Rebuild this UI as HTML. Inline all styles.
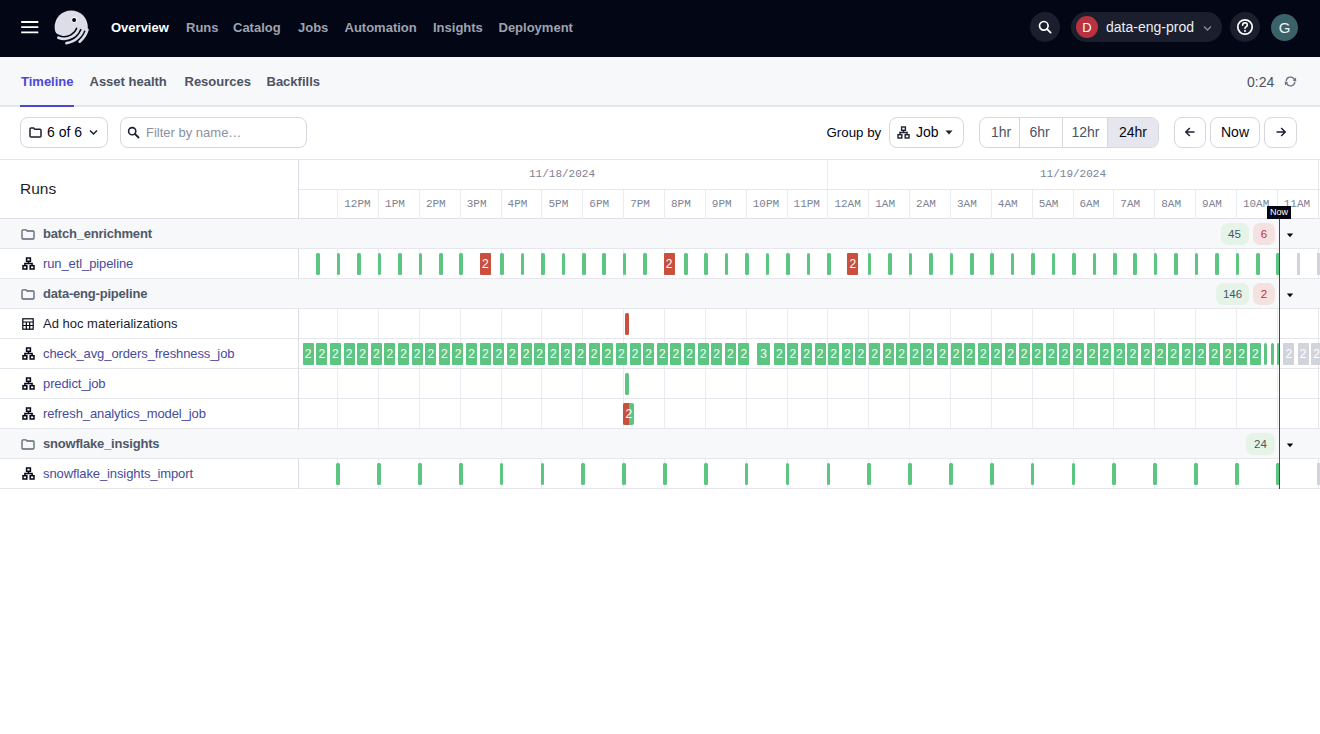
<!DOCTYPE html><html><head><meta charset="utf-8"><style>
*{box-sizing:border-box;margin:0;padding:0}
html,body{width:1320px;height:734px;overflow:hidden;background:#fff;font-family:"Liberation Sans",sans-serif;color:#030615}
.abs{position:absolute}
#nav{position:absolute;left:0;top:0;width:1320px;height:57px;background:#030615}
.ni{position:absolute;top:18px;font:700 13px/20px "Liberation Sans",sans-serif;color:#9ea2b0;white-space:nowrap}
#tabs{position:absolute;left:0;top:57px;width:1320px;height:50px;background:#f7f8fa;border-bottom:2px solid #e6e7ec}
.tab{position:absolute;top:15px;font:700 13px/20px "Liberation Sans",sans-serif;color:#4c5364;white-space:nowrap}
.btn{position:absolute;top:117px;height:31px;border:1px solid #d6d7df;border-radius:8px;background:#fff}
.txt14{font:400 14px/20px "Liberation Sans",sans-serif;color:#030615;white-space:nowrap}
#tl{position:absolute;left:0;top:159px;width:1320px}
.hdr{position:absolute;font:400 11px/14px "Liberation Mono",monospace;color:#7d8294;white-space:nowrap}
.row{position:absolute;left:0;width:1320px;height:30px;border-bottom:1px solid #e6e7ec}
.grp{background:#f7f8fa}
.lbl{position:absolute;left:43px;top:7px;font:400 13px/16px "Liberation Sans",sans-serif;white-space:nowrap}
.grp .lbl{font-weight:700;color:#505768;letter-spacing:-0.2px}
.job .lbl{color:#474b9c;letter-spacing:-0.1px}
.g{position:absolute;background:#5cc582;border-radius:1.5px}
.r{position:absolute;background:#c9503d;border-radius:1.5px}
.f{position:absolute;background:#d2d4dc}
.bx{position:absolute;height:22px;width:11px;border-radius:1px;background:#5cc582;color:#fff;font:400 12px/22px "Liberation Sans",sans-serif;text-align:center;overflow:hidden}
.bx.fu{background:#d2d4dc}
.bx.rd{background:#c9503d}
.vl{position:absolute;width:1px;background:#ebecf0}
.pill{position:absolute;height:22px;border-radius:7px;font:400 11.5px/22px "Liberation Sans",sans-serif;text-align:center}
</style></head><body>
<div id="nav">
<svg class="abs" style="left:20px;top:18px" width="20" height="18" viewBox="0 0 20 18"><g stroke="#fff" stroke-width="1.8"><path d="M1.2 4 H18.3 M1.2 9.2 H18.3 M1.2 14.4 H18.3"/></g></svg>
<svg class="abs" style="left:52px;top:8px" width="38" height="38" viewBox="0 0 38 38">
<g><circle cx="19.2" cy="19" r="16.6" fill="#dcdde6"/><path d="M24.22 19.45 A13.0 13.0 0 0 1 -1.00 15.00 L-10 15.00 L-10 45 L45 45 L38.31 24.58 Z" fill="#030615"/></g>
<g fill="none" stroke="#dcdde6" stroke-width="2.7" stroke-linecap="round"><path d="M27.65 17.20 A15.8 15.8 0 0 1 6.34 29.75"/><path d="M32.00 17.81 A20.2 20.2 0 0 1 14.46 35.05"/><path d="M35.45 21.73 A24.4 24.4 0 0 1 27.68 33.69"/></g>
<circle cx="22.3" cy="11.6" r="3.1" fill="#f4f5f8"/>
<circle cx="22.1" cy="11.9" r="2" fill="#030615"/>
</svg>
<div class="ni" style="left:111px;color:#fff;">Overview</div>
<div class="ni" style="left:186px;">Runs</div>
<div class="ni" style="left:233px;">Catalog</div>
<div class="ni" style="left:298px;">Jobs</div>
<div class="ni" style="left:344.5px;">Automation</div>
<div class="ni" style="left:433px;">Insights</div>
<div class="ni" style="left:498.5px;">Deployment</div>
<div class="abs" style="left:1030px;top:12px;width:30px;height:30px;border-radius:15px;background:#1b1e2c"></div>
<svg class="abs" style="left:1037px;top:19px" width="16" height="16" viewBox="0 0 16 16"><circle cx="6.8" cy="6.8" r="4.3" stroke="#fff" stroke-width="1.7" fill="none"/><path d="M9.9 9.9 L13.6 13.6" stroke="#fff" stroke-width="1.9" stroke-linecap="round"/></svg>
<div class="abs" style="left:1071px;top:12px;width:151px;height:30px;border-radius:15px;background:#1b1e2c"></div>
<div class="abs" style="left:1076px;top:16px;width:22px;height:22px;border-radius:11px;background:#b8323f;color:#fff;font:400 13px/24px Liberation Sans;text-align:center">D</div>
<div class="abs" style="left:1106px;top:17px;font:400 14px/20px Liberation Sans;color:#eceef3;white-space:nowrap">data-eng-prod</div>
<svg class="abs" style="left:1203px;top:24.5px" width="9" height="7" viewBox="0 0 9 7"><path d="M1 1.5 L4.5 5 L8 1.5" stroke="#8a8e9c" stroke-width="1.3" fill="none"/></svg>
<div class="abs" style="left:1230px;top:12px;width:30px;height:30px;border-radius:15px;background:#1b1e2c"></div>
<svg class="abs" style="left:1236px;top:18px" width="18" height="18" viewBox="0 0 18 18"><circle cx="9" cy="9" r="7.2" stroke="#fff" stroke-width="1.7" fill="none"/><path d="M6.6 7.1 Q6.7 4.8 9 4.8 Q11.3 4.9 11.3 6.9 Q11.3 8.3 9.8 8.9 Q9 9.3 9 10.5" stroke="#fff" stroke-width="1.6" fill="none" stroke-linecap="round"/><circle cx="9" cy="13" r="1" fill="#fff"/></svg>
<div class="abs" style="left:1271px;top:14px;width:27px;height:27px;border-radius:14px;background:#3b6169;color:#eef1f3;font:400 15px/27px Liberation Sans;text-align:center">G</div>
</div>
<div id="tabs">
<div class="tab" style="left:21px;color:#4b47d8;">Timeline</div>
<div class="tab" style="left:89.5px;">Asset health</div>
<div class="tab" style="left:184.5px;">Resources</div>
<div class="tab" style="left:266.5px;">Backfills</div>
<div class="abs" style="left:20px;top:48px;width:54px;height:2px;background:#4b47d8"></div>
<div class="abs" style="left:1247px;top:15px;font:400 14px/20px Liberation Sans;color:#4c5364">0:24</div>
<svg class="abs" style="left:1283px;top:17.5px" width="15" height="13" viewBox="0 0 15 13"><g stroke="#6c7282" stroke-width="1.3" fill="none"><path d="M3.2 6.2 A4.3 4.3 0 0 1 11.2 4.2"/><path d="M11.8 6.8 A4.3 4.3 0 0 1 3.8 8.8"/></g><path d="M12.9 2.6 L13.3 6.4 L9.6 5.6 Z" fill="#6c7282"/><path d="M2.1 10.4 L1.7 6.6 L5.4 7.4 Z" fill="#6c7282"/></svg>
</div>
<div class="btn" style="left:20px;width:88px"></div>
<svg class="abs" style="left:29px;top:127px" width="13" height="11" viewBox="0 0 13 11"><path d="M1 2 Q1 1 2 1 L4.6 1 L5.8 2.2 L11 2.2 Q12 2.2 12 3.2 L12 9 Q12 10 11 10 L2 10 Q1 10 1 9 Z" stroke="#1d2130" stroke-width="1.5" fill="none"/></svg>
<div class="abs txt14" style="left:47px;top:122px">6 of 6</div>
<svg class="abs" style="left:89px;top:129px" width="9" height="7" viewBox="0 0 9 7"><path d="M1 1.5 L4.5 5 L8 1.5" stroke="#1d2130" stroke-width="1.5" fill="none"/></svg>
<div class="btn" style="left:120px;width:187px"></div>
<svg class="abs" style="left:127px;top:126px" width="13" height="13" viewBox="0 0 13 13"><circle cx="5.2" cy="5.2" r="3.6" stroke="#1d2130" stroke-width="1.6" fill="none"/><path d="M8 8 L11.5 11.5" stroke="#1d2130" stroke-width="1.8" stroke-linecap="round"/></svg>
<div class="abs" style="left:146px;top:123px;font:400 13px/20px Liberation Sans;color:#8b90a0;white-space:nowrap">Filter by name…</div>
<div class="abs" style="left:826.5px;top:123px;font:400 13.3px/20px Liberation Sans;color:#030615;white-space:nowrap">Group by</div>
<div class="btn" style="left:889px;width:75px"></div>
<svg class="abs" style="left:897px;top:126px" width="13" height="13" viewBox="0 0 13 13"><g stroke="#1d2130" stroke-width="1.4" fill="none"><rect x="4.6" y="1" width="3.8" height="3.3"/><rect x="1" y="8.7" width="3.8" height="3.3"/><rect x="8.2" y="8.7" width="3.8" height="3.3"/><path d="M6.5 4.3 V6.5 M2.9 8.7 V6.5 H10.1 V8.7"/></g></svg>
<div class="abs txt14" style="left:916px;top:122px">Job</div>
<svg class="abs" style="left:945px;top:130px" width="8" height="5" viewBox="0 0 8 5"><path d="M0.5 0.5 L7.5 0.5 L4 4.5 Z" fill="#1d2130"/></svg>
<div class="btn" style="left:979px;width:180px;overflow:hidden"><div class="abs" style="left:128px;top:0;width:52px;height:29px;background:#e6e7ee"></div><div class="abs" style="left:39px;top:0;width:1px;height:29px;background:#d6d7df"></div><div class="abs" style="left:82px;top:0;width:1px;height:29px;background:#d6d7df"></div><div class="abs" style="left:127px;top:0;width:1px;height:29px;background:#d6d7df"></div></div>
<div class="abs txt14" style="left:991px;top:122px;color:#4c5364">1hr</div>
<div class="abs txt14" style="left:1029.5px;top:122px;color:#4c5364">6hr</div>
<div class="abs txt14" style="left:1071.5px;top:122px;color:#4c5364">12hr</div>
<div class="abs txt14" style="left:1119px;top:122px;color:#030615">24hr</div>
<div class="btn" style="left:1174px;width:32px"></div>
<svg class="abs" style="left:1184px;top:126px" width="12" height="12" viewBox="0 0 12 12"><path d="M10.5 6 H2 M5.8 2 L1.8 6 L5.8 10" stroke="#1d2130" stroke-width="1.5" fill="none"/></svg>
<div class="btn" style="left:1210px;width:50px"></div>
<div class="abs txt14" style="left:1221px;top:122px">Now</div>
<div class="btn" style="left:1264px;width:33px"></div>
<svg class="abs" style="left:1275px;top:126px" width="12" height="12" viewBox="0 0 12 12"><path d="M1.5 6 H10 M6.2 2 L10.2 6 L6.2 10" stroke="#1d2130" stroke-width="1.5" fill="none"/></svg>
<div class="abs" style="left:0;top:159px;width:1320px;height:1px;background:#e6e7ec"></div>
<div class="abs" style="left:298px;top:189px;width:1022px;height:1px;background:#e6e7ec"></div>
<div class="abs" style="left:0;top:218px;width:1320px;height:1px;background:#dfe0e7"></div>
<div class="abs" style="left:20px;top:178.5px;font:400 15.5px/20px Liberation Sans;color:#1a1f2e">Runs</div>
<div class="abs hdr" style="left:529px;top:167px">11/18/2024</div>
<div class="abs hdr" style="left:1040px;top:167px">11/19/2024</div>
<div class="vl" style="left:827px;top:160px;height:29px"></div>
<div class="vl" style="left:337.20px;top:190px;height:299px"></div>
<div class="abs hdr" style="left:344.20px;top:197px">12PM</div>
<div class="vl" style="left:378.05px;top:190px;height:299px"></div>
<div class="abs hdr" style="left:385.05px;top:197px">1PM</div>
<div class="vl" style="left:418.90px;top:190px;height:299px"></div>
<div class="abs hdr" style="left:425.90px;top:197px">2PM</div>
<div class="vl" style="left:459.75px;top:190px;height:299px"></div>
<div class="abs hdr" style="left:466.75px;top:197px">3PM</div>
<div class="vl" style="left:500.60px;top:190px;height:299px"></div>
<div class="abs hdr" style="left:507.60px;top:197px">4PM</div>
<div class="vl" style="left:541.45px;top:190px;height:299px"></div>
<div class="abs hdr" style="left:548.45px;top:197px">5PM</div>
<div class="vl" style="left:582.30px;top:190px;height:299px"></div>
<div class="abs hdr" style="left:589.30px;top:197px">6PM</div>
<div class="vl" style="left:623.15px;top:190px;height:299px"></div>
<div class="abs hdr" style="left:630.15px;top:197px">7PM</div>
<div class="vl" style="left:664.00px;top:190px;height:299px"></div>
<div class="abs hdr" style="left:671.00px;top:197px">8PM</div>
<div class="vl" style="left:704.85px;top:190px;height:299px"></div>
<div class="abs hdr" style="left:711.85px;top:197px">9PM</div>
<div class="vl" style="left:745.70px;top:190px;height:299px"></div>
<div class="abs hdr" style="left:752.70px;top:197px">10PM</div>
<div class="vl" style="left:786.55px;top:190px;height:299px"></div>
<div class="abs hdr" style="left:793.55px;top:197px">11PM</div>
<div class="vl" style="left:827.40px;top:190px;height:299px"></div>
<div class="abs hdr" style="left:834.40px;top:197px">12AM</div>
<div class="vl" style="left:868.25px;top:190px;height:299px"></div>
<div class="abs hdr" style="left:875.25px;top:197px">1AM</div>
<div class="vl" style="left:909.10px;top:190px;height:299px"></div>
<div class="abs hdr" style="left:916.10px;top:197px">2AM</div>
<div class="vl" style="left:949.95px;top:190px;height:299px"></div>
<div class="abs hdr" style="left:956.95px;top:197px">3AM</div>
<div class="vl" style="left:990.80px;top:190px;height:299px"></div>
<div class="abs hdr" style="left:997.80px;top:197px">4AM</div>
<div class="vl" style="left:1031.65px;top:190px;height:299px"></div>
<div class="abs hdr" style="left:1038.65px;top:197px">5AM</div>
<div class="vl" style="left:1072.50px;top:190px;height:299px"></div>
<div class="abs hdr" style="left:1079.50px;top:197px">6AM</div>
<div class="vl" style="left:1113.35px;top:190px;height:299px"></div>
<div class="abs hdr" style="left:1120.35px;top:197px">7AM</div>
<div class="vl" style="left:1154.20px;top:190px;height:299px"></div>
<div class="abs hdr" style="left:1161.20px;top:197px">8AM</div>
<div class="vl" style="left:1195.05px;top:190px;height:299px"></div>
<div class="abs hdr" style="left:1202.05px;top:197px">9AM</div>
<div class="vl" style="left:1235.90px;top:190px;height:299px"></div>
<div class="abs hdr" style="left:1242.90px;top:197px">10AM</div>
<div class="vl" style="left:1276.75px;top:190px;height:299px"></div>
<div class="abs hdr" style="left:1283.75px;top:197px">11AM</div>
<div class="vl" style="left:1318px;top:160px;height:329px;background:#e6e7ec"></div>
<div class="row grp" style="top:219px"><svg class="abs" style="left:21px;top:10px" width="14" height="11" viewBox="0 0 14 11"><path d="M1 1.8 Q1 0.8 2 0.8 L5 0.8 L6.2 2 L12 2 Q13 2 13 3 L13 9 Q13 10 12 10 L2 10 Q1 10 1 9 Z" stroke="#5c6272" stroke-width="1.3" fill="none"/></svg><div class="lbl">batch_enrichment</div></div>
<div class="row job" style="top:249px"><svg class="abs" style="left:22px;top:8px" width="13" height="13" viewBox="0 0 13 13"><g stroke="#030615" stroke-width="1.5" fill="none"><rect x="4.6" y="1" width="3.8" height="3.3"/><rect x="1" y="8.7" width="3.8" height="3.3"/><rect x="8.2" y="8.7" width="3.8" height="3.3"/><path d="M6.5 4.3 V6.5 M2.9 8.7 V6.5 H10.1 V8.7"/></g></svg><div class="lbl">run_etl_pipeline</div></div>
<div class="row grp" style="top:279px"><svg class="abs" style="left:21px;top:10px" width="14" height="11" viewBox="0 0 14 11"><path d="M1 1.8 Q1 0.8 2 0.8 L5 0.8 L6.2 2 L12 2 Q13 2 13 3 L13 9 Q13 10 12 10 L2 10 Q1 10 1 9 Z" stroke="#5c6272" stroke-width="1.3" fill="none"/></svg><div class="lbl">data-eng-pipeline</div></div>
<div class="row job" style="top:309px"><svg class="abs" style="left:22px;top:9px" width="12" height="12" viewBox="0 0 12 12"><g stroke="#030615" stroke-width="1.2" fill="none"><rect x="0.8" y="0.8" width="10.4" height="10.4"/><path d="M0.8 4 H11.2 M0.8 7.5 H11.2 M4.3 4 V11.2 M7.7 4 V11.2"/></g></svg><div class="lbl" style="color:#1a1e2d;letter-spacing:0">Ad hoc materializations</div></div>
<div class="row job" style="top:339px"><svg class="abs" style="left:22px;top:8px" width="13" height="13" viewBox="0 0 13 13"><g stroke="#030615" stroke-width="1.5" fill="none"><rect x="4.6" y="1" width="3.8" height="3.3"/><rect x="1" y="8.7" width="3.8" height="3.3"/><rect x="8.2" y="8.7" width="3.8" height="3.3"/><path d="M6.5 4.3 V6.5 M2.9 8.7 V6.5 H10.1 V8.7"/></g></svg><div class="lbl">check_avg_orders_freshness_job</div></div>
<div class="row job" style="top:369px"><svg class="abs" style="left:22px;top:8px" width="13" height="13" viewBox="0 0 13 13"><g stroke="#030615" stroke-width="1.5" fill="none"><rect x="4.6" y="1" width="3.8" height="3.3"/><rect x="1" y="8.7" width="3.8" height="3.3"/><rect x="8.2" y="8.7" width="3.8" height="3.3"/><path d="M6.5 4.3 V6.5 M2.9 8.7 V6.5 H10.1 V8.7"/></g></svg><div class="lbl">predict_job</div></div>
<div class="row job" style="top:399px"><svg class="abs" style="left:22px;top:8px" width="13" height="13" viewBox="0 0 13 13"><g stroke="#030615" stroke-width="1.5" fill="none"><rect x="4.6" y="1" width="3.8" height="3.3"/><rect x="1" y="8.7" width="3.8" height="3.3"/><rect x="8.2" y="8.7" width="3.8" height="3.3"/><path d="M6.5 4.3 V6.5 M2.9 8.7 V6.5 H10.1 V8.7"/></g></svg><div class="lbl">refresh_analytics_model_job</div></div>
<div class="row grp" style="top:429px"><svg class="abs" style="left:21px;top:10px" width="14" height="11" viewBox="0 0 14 11"><path d="M1 1.8 Q1 0.8 2 0.8 L5 0.8 L6.2 2 L12 2 Q13 2 13 3 L13 9 Q13 10 12 10 L2 10 Q1 10 1 9 Z" stroke="#5c6272" stroke-width="1.3" fill="none"/></svg><div class="lbl">snowflake_insights</div></div>
<div class="row job" style="top:459px"><svg class="abs" style="left:22px;top:8px" width="13" height="13" viewBox="0 0 13 13"><g stroke="#030615" stroke-width="1.5" fill="none"><rect x="4.6" y="1" width="3.8" height="3.3"/><rect x="1" y="8.7" width="3.8" height="3.3"/><rect x="8.2" y="8.7" width="3.8" height="3.3"/><path d="M6.5 4.3 V6.5 M2.9 8.7 V6.5 H10.1 V8.7"/></g></svg><div class="lbl">snowflake_insights_import</div></div>
<div class="abs" style="left:298px;top:160px;width:1px;height:59px;background:#dcdde4"></div>
<div class="abs" style="left:298px;top:249px;width:1px;height:30px;background:#dcdde4"></div>
<div class="abs" style="left:298px;top:309px;width:1px;height:120px;background:#dcdde4"></div>
<div class="abs" style="left:298px;top:459px;width:1px;height:30px;background:#dcdde4"></div>
<div class="g" style="left:316.40px;top:253px;width:3.6px;height:22px"></div>
<div class="g" style="left:336.82px;top:253px;width:3.6px;height:22px"></div>
<div class="g" style="left:357.25px;top:253px;width:3.6px;height:22px"></div>
<div class="g" style="left:377.67px;top:253px;width:3.6px;height:22px"></div>
<div class="g" style="left:398.10px;top:253px;width:3.6px;height:22px"></div>
<div class="g" style="left:418.52px;top:253px;width:3.6px;height:22px"></div>
<div class="g" style="left:438.95px;top:253px;width:3.6px;height:22px"></div>
<div class="g" style="left:459.38px;top:253px;width:3.6px;height:22px"></div>
<div class="bx rd" style="left:479.80px;top:253px">2</div>
<div class="g" style="left:500.23px;top:253px;width:3.6px;height:22px"></div>
<div class="g" style="left:520.65px;top:253px;width:3.6px;height:22px"></div>
<div class="g" style="left:541.08px;top:253px;width:3.6px;height:22px"></div>
<div class="g" style="left:561.50px;top:253px;width:3.6px;height:22px"></div>
<div class="g" style="left:581.92px;top:253px;width:3.6px;height:22px"></div>
<div class="g" style="left:602.35px;top:253px;width:3.6px;height:22px"></div>
<div class="g" style="left:622.77px;top:253px;width:3.6px;height:22px"></div>
<div class="g" style="left:643.20px;top:253px;width:3.6px;height:22px"></div>
<div class="bx rd" style="left:663.62px;top:253px">2</div>
<div class="g" style="left:684.05px;top:253px;width:3.6px;height:22px"></div>
<div class="g" style="left:704.47px;top:253px;width:3.6px;height:22px"></div>
<div class="g" style="left:724.90px;top:253px;width:3.6px;height:22px"></div>
<div class="g" style="left:745.33px;top:253px;width:3.6px;height:22px"></div>
<div class="g" style="left:765.75px;top:253px;width:3.6px;height:22px"></div>
<div class="g" style="left:786.17px;top:253px;width:3.6px;height:22px"></div>
<div class="g" style="left:806.60px;top:253px;width:3.6px;height:22px"></div>
<div class="g" style="left:827.02px;top:253px;width:3.6px;height:22px"></div>
<div class="bx rd" style="left:847.45px;top:253px">2</div>
<div class="g" style="left:867.88px;top:253px;width:3.6px;height:22px"></div>
<div class="g" style="left:888.30px;top:253px;width:3.6px;height:22px"></div>
<div class="g" style="left:908.73px;top:253px;width:3.6px;height:22px"></div>
<div class="g" style="left:929.15px;top:253px;width:3.6px;height:22px"></div>
<div class="g" style="left:949.58px;top:253px;width:3.6px;height:22px"></div>
<div class="g" style="left:970.00px;top:253px;width:3.6px;height:22px"></div>
<div class="g" style="left:990.42px;top:253px;width:3.6px;height:22px"></div>
<div class="g" style="left:1010.85px;top:253px;width:3.6px;height:22px"></div>
<div class="g" style="left:1031.28px;top:253px;width:3.6px;height:22px"></div>
<div class="g" style="left:1051.70px;top:253px;width:3.6px;height:22px"></div>
<div class="g" style="left:1072.12px;top:253px;width:3.6px;height:22px"></div>
<div class="g" style="left:1092.55px;top:253px;width:3.6px;height:22px"></div>
<div class="g" style="left:1112.97px;top:253px;width:3.6px;height:22px"></div>
<div class="g" style="left:1133.40px;top:253px;width:3.6px;height:22px"></div>
<div class="g" style="left:1153.83px;top:253px;width:3.6px;height:22px"></div>
<div class="g" style="left:1174.25px;top:253px;width:3.6px;height:22px"></div>
<div class="g" style="left:1194.67px;top:253px;width:3.6px;height:22px"></div>
<div class="g" style="left:1215.10px;top:253px;width:3.6px;height:22px"></div>
<div class="g" style="left:1235.53px;top:253px;width:3.6px;height:22px"></div>
<div class="g" style="left:1255.95px;top:253px;width:3.6px;height:22px"></div>
<div class="g" style="left:1276.38px;top:253px;width:3.6px;height:22px"></div>
<div class="f" style="left:1296.80px;top:253px;width:3.4px;height:22px"></div>
<div class="f" style="left:1317.22px;top:253px;width:3.4px;height:22px"></div>
<div class="r" style="left:625.00px;top:313px;width:3.6px;height:22px"></div>
<div class="bx" style="left:302.70px;top:343px">2</div>
<div class="bx" style="left:316.32px;top:343px">2</div>
<div class="bx" style="left:329.93px;top:343px">2</div>
<div class="bx" style="left:343.55px;top:343px">2</div>
<div class="bx" style="left:357.17px;top:343px">2</div>
<div class="bx" style="left:370.78px;top:343px">2</div>
<div class="bx" style="left:384.40px;top:343px">2</div>
<div class="bx" style="left:398.02px;top:343px">2</div>
<div class="bx" style="left:411.64px;top:343px">2</div>
<div class="bx" style="left:425.25px;top:343px">2</div>
<div class="bx" style="left:438.87px;top:343px">2</div>
<div class="bx" style="left:452.49px;top:343px">2</div>
<div class="bx" style="left:466.10px;top:343px">2</div>
<div class="bx" style="left:479.72px;top:343px">2</div>
<div class="bx" style="left:493.34px;top:343px">2</div>
<div class="bx" style="left:506.96px;top:343px">2</div>
<div class="bx" style="left:520.57px;top:343px">2</div>
<div class="bx" style="left:534.19px;top:343px">2</div>
<div class="bx" style="left:547.81px;top:343px">2</div>
<div class="bx" style="left:561.42px;top:343px">2</div>
<div class="bx" style="left:575.04px;top:343px">2</div>
<div class="bx" style="left:588.66px;top:343px">2</div>
<div class="bx" style="left:602.27px;top:343px">2</div>
<div class="bx" style="left:615.89px;top:343px">2</div>
<div class="bx" style="left:629.51px;top:343px">2</div>
<div class="bx" style="left:643.12px;top:343px">2</div>
<div class="bx" style="left:656.74px;top:343px">2</div>
<div class="bx" style="left:670.36px;top:343px">2</div>
<div class="bx" style="left:683.98px;top:343px">2</div>
<div class="bx" style="left:697.59px;top:343px">2</div>
<div class="bx" style="left:711.21px;top:343px">2</div>
<div class="bx" style="left:724.83px;top:343px">2</div>
<div class="bx" style="left:738.44px;top:343px">2</div>
<div class="bx" style="left:757.3px;top:343px;width:12.8px">3</div>
<div class="bx" style="left:773.80px;top:343px">2</div>
<div class="bx" style="left:787.40px;top:343px">2</div>
<div class="bx" style="left:801.00px;top:343px">2</div>
<div class="bx" style="left:814.60px;top:343px">2</div>
<div class="bx" style="left:828.20px;top:343px">2</div>
<div class="bx" style="left:841.80px;top:343px">2</div>
<div class="bx" style="left:855.40px;top:343px">2</div>
<div class="bx" style="left:869.00px;top:343px">2</div>
<div class="bx" style="left:882.60px;top:343px">2</div>
<div class="bx" style="left:896.20px;top:343px">2</div>
<div class="bx" style="left:909.80px;top:343px">2</div>
<div class="bx" style="left:923.40px;top:343px">2</div>
<div class="bx" style="left:937.00px;top:343px">2</div>
<div class="bx" style="left:950.60px;top:343px">2</div>
<div class="bx" style="left:964.20px;top:343px">2</div>
<div class="bx" style="left:977.80px;top:343px">2</div>
<div class="bx" style="left:991.40px;top:343px">2</div>
<div class="bx" style="left:1005.00px;top:343px">2</div>
<div class="bx" style="left:1018.60px;top:343px">2</div>
<div class="bx" style="left:1032.20px;top:343px">2</div>
<div class="bx" style="left:1045.80px;top:343px">2</div>
<div class="bx" style="left:1059.40px;top:343px">2</div>
<div class="bx" style="left:1073.00px;top:343px">2</div>
<div class="bx" style="left:1086.60px;top:343px">2</div>
<div class="bx" style="left:1100.20px;top:343px">2</div>
<div class="bx" style="left:1113.80px;top:343px">2</div>
<div class="bx" style="left:1127.40px;top:343px">2</div>
<div class="bx" style="left:1141.00px;top:343px">2</div>
<div class="bx" style="left:1154.60px;top:343px">2</div>
<div class="bx" style="left:1168.20px;top:343px">2</div>
<div class="bx" style="left:1181.80px;top:343px">2</div>
<div class="bx" style="left:1195.40px;top:343px">2</div>
<div class="bx" style="left:1209.00px;top:343px">2</div>
<div class="bx" style="left:1222.60px;top:343px">2</div>
<div class="bx" style="left:1236.20px;top:343px">2</div>
<div class="bx" style="left:1249.80px;top:343px">2</div>
<div class="g" style="left:1263.80px;top:343px;width:3.4px;height:22px"></div>
<div class="g" style="left:1270.50px;top:343px;width:3.4px;height:22px"></div>
<div class="g" style="left:1276.70px;top:343px;width:3.4px;height:22px"></div>
<div class="bx fu" style="left:1283.40px;top:343px">2</div>
<div class="bx fu" style="left:1297.70px;top:343px">2</div>
<div class="bx fu" style="left:1311.00px;top:343px">2</div>
<div class="g" style="left:625.00px;top:373px;width:3.6px;height:22px"></div>
<div class="abs" style="left:623.3px;top:403px;width:11.2px;height:22px;border-radius:2px;overflow:hidden;background:#5cc582"><div class="abs" style="left:0;top:0;width:5.7px;height:22px;background:#c9503d"></div><div class="abs" style="left:0;top:0;width:11.2px;font:400 12px/22px Liberation Sans;color:#fff;text-align:center">2</div></div>
<div class="g" style="left:336.30px;top:463px;width:3.7px;height:22px"></div>
<div class="g" style="left:377.15px;top:463px;width:3.7px;height:22px"></div>
<div class="g" style="left:418.00px;top:463px;width:3.7px;height:22px"></div>
<div class="g" style="left:458.85px;top:463px;width:3.7px;height:22px"></div>
<div class="g" style="left:499.70px;top:463px;width:3.7px;height:22px"></div>
<div class="g" style="left:540.55px;top:463px;width:3.7px;height:22px"></div>
<div class="g" style="left:581.40px;top:463px;width:3.7px;height:22px"></div>
<div class="g" style="left:622.25px;top:463px;width:3.7px;height:22px"></div>
<div class="g" style="left:663.10px;top:463px;width:3.7px;height:22px"></div>
<div class="g" style="left:703.95px;top:463px;width:3.7px;height:22px"></div>
<div class="g" style="left:744.80px;top:463px;width:3.7px;height:22px"></div>
<div class="g" style="left:785.65px;top:463px;width:3.7px;height:22px"></div>
<div class="g" style="left:826.50px;top:463px;width:3.7px;height:22px"></div>
<div class="g" style="left:867.35px;top:463px;width:3.7px;height:22px"></div>
<div class="g" style="left:908.20px;top:463px;width:3.7px;height:22px"></div>
<div class="g" style="left:949.05px;top:463px;width:3.7px;height:22px"></div>
<div class="g" style="left:989.90px;top:463px;width:3.7px;height:22px"></div>
<div class="g" style="left:1030.75px;top:463px;width:3.7px;height:22px"></div>
<div class="g" style="left:1071.60px;top:463px;width:3.7px;height:22px"></div>
<div class="g" style="left:1112.45px;top:463px;width:3.7px;height:22px"></div>
<div class="g" style="left:1153.30px;top:463px;width:3.7px;height:22px"></div>
<div class="g" style="left:1194.15px;top:463px;width:3.7px;height:22px"></div>
<div class="g" style="left:1235.00px;top:463px;width:3.7px;height:22px"></div>
<div class="g" style="left:1275.85px;top:463px;width:3.7px;height:22px"></div>
<div class="f" style="left:1316.70px;top:463px;width:3.4px;height:22px"></div>
<div class="pill" style="left:1220.5px;top:223px;width:28px;background:#e6f4e8;color:#4c5364">45</div>
<div class="pill" style="left:1253px;top:223px;width:22px;background:#f4e2e0;color:#c0303b">6</div>
<svg class="abs" style="left:1286px;top:233px" width="8" height="5" viewBox="0 0 8 5"><path d="M0.8 0.5 L7.2 0.5 L4 4.3 Z" fill="#030615"/></svg>
<div class="pill" style="left:1216px;top:283px;width:33px;background:#e6f4e8;color:#4c5364">146</div>
<div class="pill" style="left:1253px;top:283px;width:22px;background:#f4e2e0;color:#c0303b">2</div>
<svg class="abs" style="left:1286px;top:293px" width="8" height="5" viewBox="0 0 8 5"><path d="M0.8 0.5 L7.2 0.5 L4 4.3 Z" fill="#030615"/></svg>
<div class="pill" style="left:1246px;top:433px;width:29px;background:#e6f4e8;color:#4c5364">24</div>
<svg class="abs" style="left:1286px;top:443px" width="8" height="5" viewBox="0 0 8 5"><path d="M0.8 0.5 L7.2 0.5 L4 4.3 Z" fill="#030615"/></svg>
<div class="abs" style="left:1279px;top:206px;width:1.2px;height:283px;background:#434857"></div>
<div class="abs" style="left:1267px;top:206px;width:24px;height:13px;background:#030615;color:#fff;font:400 9px/13px Liberation Sans;text-align:center">Now</div>
</body></html>
